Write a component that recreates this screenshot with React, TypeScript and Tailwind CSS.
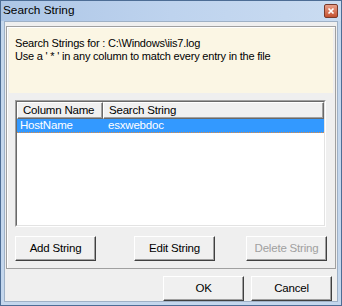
import React from 'react';

function Button({ label, disabled, className }: { label: string; disabled?: boolean; className?: string }) {
  return (
    <div
      className={`flex h-[25px] w-[81px] items-center justify-center border border-t-white border-l-white border-r-[#404040] border-b-[#404040] bg-[#f0f0f0] shadow-[inset_-1px_-1px_0_#a0a0a0] text-[11.5px] tracking-[-0.2px] ${
        disabled ? 'text-[#a0a0a0]' : 'text-black'
      } ${className ?? ''}`}
    >
      {label}
    </div>
  );
}

export default function App() {
  return (
    <div className="flex h-[306px] w-[342px] flex-col border border-[#4d6d95] bg-[#c4d7ed] font-['Liberation_Sans',sans-serif]">
      <div className="flex h-[20px] items-center justify-between bg-gradient-to-r from-[#adc6e6] via-[#bed3ee] to-[#cadcf1] pl-[2px] pr-[3px]">
        <span className="text-[11.8px] leading-none text-black">Search String</span>
        <div className="flex h-[14px] w-[14px] items-center justify-center rounded-[2px] border border-[#7a3a2a] bg-gradient-to-b from-[#e8a08a] to-[#c4512f]">
          <svg width="8" height="8" viewBox="0 0 8 8">
            <path d="M1.5 1.5L6.5 6.5M6.5 1.5L1.5 6.5" stroke="white" strokeWidth="1.7" />
          </svg>
        </div>
      </div>
      <div className="mx-[3px] mb-[3px] flex flex-1 flex-col border border-[#9fb1c6] bg-[#efefef] px-[1px] pt-[4px]">
        <div className="flex h-[243px] flex-col border border-[#a0a0a0] px-[2px] pt-[1px] shadow-[inset_1px_1px_0_#fff]">
          <div className="h-[65px] bg-[#fbf6e4] pl-[6px] pt-[9px] text-[11px] leading-[13px] tracking-[-0.2px] text-black">
            <div>Search Strings for : C:\Windows\iis7.log</div>
            <div>Use a ' * ' in any column to match every entry in the file</div>
          </div>
          <div className="ml-[6px] mt-[7px] flex h-[127px] w-[311px] flex-col border border-t-[#a0a0a0] border-l-[#a0a0a0] border-r-white border-b-white">
            <div className="flex flex-1 flex-col border border-t-[#696969] border-l-[#696969] border-r-[#e3e3e3] border-b-[#e3e3e3] bg-white">
              <div className="flex h-[17px] text-[11.5px] tracking-[-0.2px] text-black">
                <div className="flex w-[86px] items-center border border-t-white border-l-white border-r-[#696969] border-b-[#696969] bg-[#f0f0f0] pl-[5px] shadow-[inset_-1px_-1px_0_#a0a0a0]">
                  Column Name
                </div>
                <div className="flex flex-1 items-center border border-t-white border-l-white border-r-[#696969] border-b-[#696969] bg-[#f0f0f0] pl-[5px] shadow-[inset_-1px_-1px_0_#a0a0a0]">
                  Search String
                </div>
              </div>
              <div className="flex h-[14px] items-center border-b border-dotted border-[#e08a40] bg-[#3399ff] text-[11.5px] tracking-[-0.2px] text-white">
                <div className="w-[86px] pl-[3px]">HostName</div>
                <div className="pl-[5px]">esxwebdoc</div>
              </div>
            </div>
          </div>
          <div className="ml-[6px] mt-[9px] flex">
            <Button label="Add String" />
            <Button label="Edit String" className="ml-[38px]" />
            <Button label="Delete String" disabled className="ml-[31px]" />
          </div>
        </div>
        <div className="ml-[157px] mt-[7px] flex">
          <Button label="OK" />
          <Button label="Cancel" className="ml-[7px]" />
        </div>
      </div>
    </div>
  );
}
